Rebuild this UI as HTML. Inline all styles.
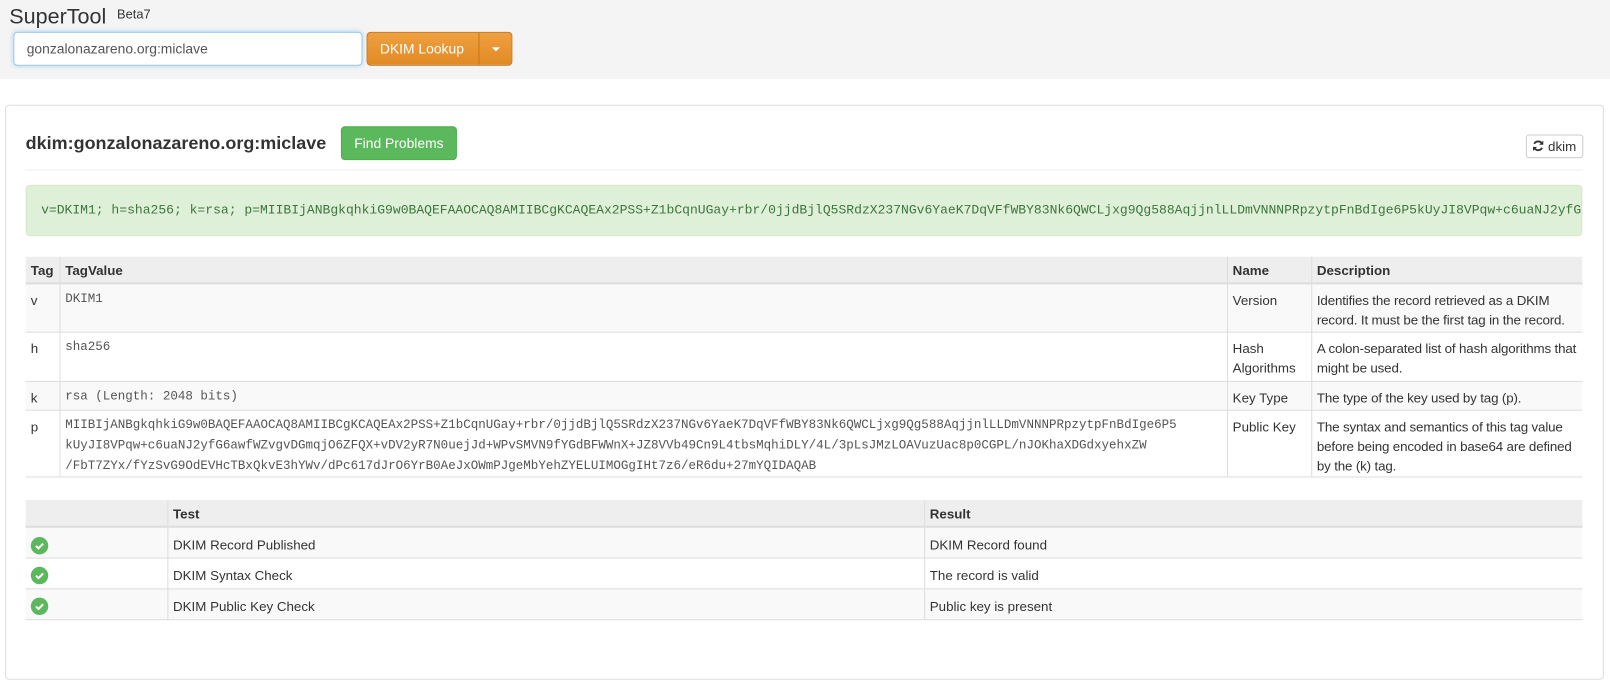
<!DOCTYPE html>
<html><head><meta charset="utf-8"><style>
*{box-sizing:border-box}
body{margin:0;width:1610px;height:634px;overflow:hidden;background:#fff;font-family:"Liberation Sans",sans-serif;font-size:13px;color:#333}
#w{position:absolute;left:0;top:0;width:1568px;height:620px;transform:scale(1.0268);transform-origin:0 0}
.top{position:absolute;left:0;top:0;width:1568px;height:77px;background:#f4f4f4}
.brand{position:absolute;left:9px;top:5px;font-size:21px;color:#333}
.brand sup{font-size:12.5px;position:absolute;top:2px;left:105px}
.inp{position:absolute;left:13px;top:31px;width:340px;height:33px;border:1px solid #9ecaed;border-radius:4px;background:#fff;box-shadow:0 0 4px rgba(102,175,233,.5);padding:8px 12px;font-size:13.5px;color:#555}
.btn{position:absolute;left:357px;top:31px;height:33px;width:142px;border-radius:4px;background:linear-gradient(#f0a040,#e08a25);border:1px solid #c87518;color:#fff;font-size:13.5px}
.btn span{position:absolute;left:12px;top:8px}
.btn i{position:absolute;left:108px;top:0;width:1px;height:31px;background:#c87518}
.btn b{position:absolute;left:121px;top:14px;border-left:4px solid transparent;border-right:4px solid transparent;border-top:4px solid #fff}
.panel{position:absolute;left:5px;top:102px;width:1557px;height:560px;border:1px solid #ddd;border-radius:4px}
h3{position:absolute;left:25px;top:129px;margin:0;font-size:17.5px;font-weight:bold;color:#333}
.fp{position:absolute;left:332px;top:123px;width:113px;height:33px;background:#5cb85c;border:1px solid #4cae4c;border-radius:4px;color:#fff;font-size:13.5px;text-align:center;line-height:31px}
.dk{position:absolute;left:1486px;top:131px;width:56px;height:23px;border:1px solid #ccc;border-radius:3px;font-size:13px;line-height:21px;padding-left:5px;background:#fff}
.hr{position:absolute;left:25px;top:165px;width:1516px;height:1px;background:#eee}
.alert{position:absolute;left:25px;top:180px;width:1516px;height:50px;background:#dff0d8;border:1px solid #d6e9c6;border-radius:4px;color:#3c763d;font-family:"Liberation Mono",monospace;font-size:12.7px;padding:16px 14px;white-space:nowrap;overflow:hidden}
table{position:absolute;left:25px;border-collapse:collapse;width:1516px}
td,th{border:1px solid #ddd;padding:6px 5px 0;vertical-align:top;text-align:left;line-height:19px}
td:first-child,th:first-child{border-left:none}
td:last-child,th:last-child{border-right:none}
th{background:#eee;font-weight:bold;border-bottom:2px solid #ddd;height:26px;padding-top:4px;border-top:none}
td.d{letter-spacing:-0.15px;padding-right:3px}
tr.o td{background:#f9f9f9}
td.m{font-family:"Liberation Mono",monospace;font-size:12.2px;color:#555;line-height:20px;padding-top:4px}
.ok{display:inline-block;width:17px;height:17px;border-radius:50%;background:#5cb85c;vertical-align:middle;margin-top:1px}
</style></head><body>
<div id="w">
<div class="top">
<div class="brand">SuperTool<sup>Beta7</sup></div>
<div class="inp">gonzalonazareno.org:miclave</div>
<div class="btn"><span>DKIM Lookup</span><i></i><b></b></div>
</div>
<div class="panel"></div>
<h3>dkim:gonzalonazareno.org:miclave</h3>
<div class="fp">Find Problems</div>
<div class="dk"><svg width="12" height="12" viewBox="0 0 12 12" style="vertical-align:-1px"><path d="M10 4.5A4.3 4.3 0 0 0 2.2 4M2 7.5A4.3 4.3 0 0 0 9.8 8" fill="none" stroke="#333" stroke-width="1.8"/><path d="M11 1v4H7zM1 11V7h4z" fill="#333"/></svg> dkim</div>
<div class="hr"></div>
<div class="alert">v=DKIM1; h=sha256; k=rsa; p=MIIBIjANBgkqhkiG9w0BAQEFAAOCAQ8AMIIBCgKCAQEAx2PSS+Z1bCqnUGay+rbr/0jjdBjlQ5SRdzX237NGv6YaeK7DqVFfWBY83Nk6QWCLjxg9Qg588AqjjnlLLDmVNNNPRpzytpFnBdIge6P5kUyJI8VPqw+c6uaNJ2yfG6awfWZvgvDGmqjO6ZFQX</div>
<table style="top:250px">
<tr><th style="width:33px">Tag</th><th>TagValue</th><th style="width:82px">Name</th><th style="width:264px">Description</th></tr>
<tr class="o" style="height:47px"><td>v</td><td class="m">DKIM1</td><td>Version</td><td class="d">Identifies the record retrieved as a DKIM record. It must be the first tag in the record.</td></tr>
<tr style="height:48px"><td>h</td><td class="m">sha256</td><td>Hash Algorithms</td><td class="d">A colon-separated list of hash algorithms that might be used.</td></tr>
<tr class="o" style="height:28px"><td>k</td><td class="m">rsa (Length: 2048 bits)</td><td>Key Type</td><td class="d">The type of the key used by tag (p).</td></tr>
<tr style="height:65px"><td>p</td><td class="m">MIIBIjANBgkqhkiG9w0BAQEFAAOCAQ8AMIIBCgKCAQEAx2PSS+Z1bCqnUGay+rbr/0jjdBjlQ5SRdzX237NGv6YaeK7DqVFfWBY83Nk6QWCLjxg9Qg588AqjjnlLLDmVNNNPRpzytpFnBdIge6P5<br>kUyJI8VPqw+c6uaNJ2yfG6awfWZvgvDGmqjO6ZFQX+vDV2yR7N0uejJd+WPvSMVN9fYGdBFWWnX+JZ8VVb49Cn9L4tbsMqhiDLY/4L/3pLsJMzLOAVuzUac8p0CGPL/nJOKhaXDGdxyehxZW<br>/FbT7ZYx/fYzSvG9OdEVHcTBxQkvE3hYWv/dPc617dJrO6YrB0AeJxOWmPJgeMbYehZYELUIMOGgIHt7z6/eR6du+27mYQIDAQAB</td><td>Public Key</td><td class="d">The syntax and semantics of this tag value before being encoded in base64 are defined by the (k) tag.</td></tr>
</table>
<table style="top:487px">
<tr><th style="width:138px"></th><th style="width:737px">Test</th><th>Result</th></tr>
<tr class="o" style="height:30px"><td><span class="ok"><svg width="17" height="17"><path d="M5 8.7l2.5 2.3 4.5-4.5" fill="none" stroke="#fff" stroke-width="2"/></svg></span></td><td style="padding-top:7px">DKIM Record Published</td><td style="padding-top:7px">DKIM Record found</td></tr>
<tr style="height:30px"><td><span class="ok"><svg width="17" height="17"><path d="M5 8.7l2.5 2.3 4.5-4.5" fill="none" stroke="#fff" stroke-width="2"/></svg></span></td><td style="padding-top:7px">DKIM Syntax Check</td><td style="padding-top:7px">The record is valid</td></tr>
<tr class="o" style="height:30px"><td><span class="ok"><svg width="17" height="17"><path d="M5 8.7l2.5 2.3 4.5-4.5" fill="none" stroke="#fff" stroke-width="2"/></svg></span></td><td style="padding-top:7px">DKIM Public Key Check</td><td style="padding-top:7px">Public key is present</td></tr>
</table>
</div>
</body></html>
